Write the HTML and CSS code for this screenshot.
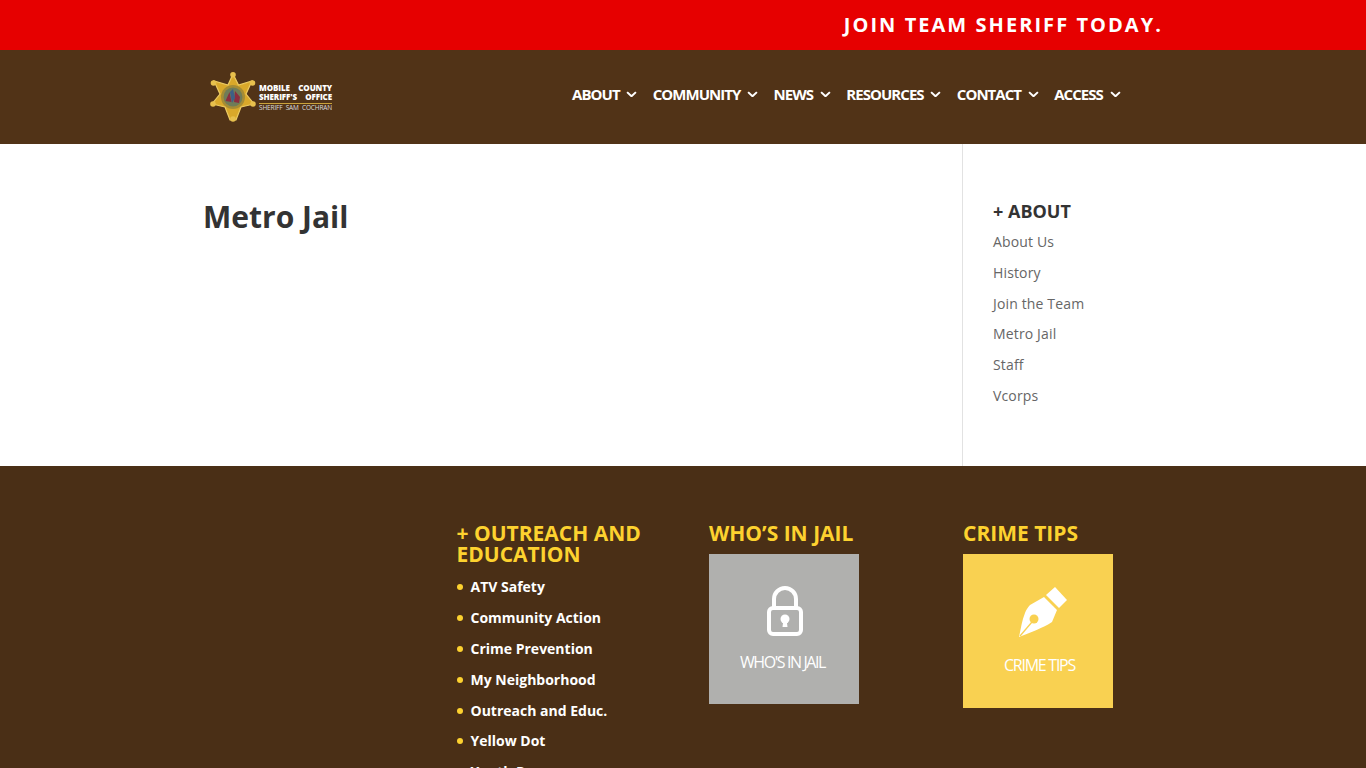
FILE: index.html
```html
<!DOCTYPE html>
<html lang="en">
<head>
<meta charset="utf-8">
<title>Metro Jail</title>
<link rel="stylesheet" href="styles.css">
</head>
<body>
<div class="topbar"><div class="wrap topbar-in"><span class="join">JOIN TEAM SHERIFF TODAY.</span></div></div>
<header class="header">
  <div class="wrap header-in">
    <a class="logo" href="#">
      <svg class="star" viewBox="0 1 46 50" width="46" height="50">
        <polygon points="23,3 28.500,14 42,10 36,23 44,33 31,36 26,49 20,49 15,36 2,33 10,23 4,10 18,14" fill="#d9a82a" stroke="#eccb63" stroke-width="1.200"/>
        <circle cx="23" cy="3.800" r="2.800" fill="#e7c04d"/><circle cx="42.500" cy="12" r="2.800" fill="#e7c04d"/><circle cx="43" cy="33" r="2.800" fill="#e7c04d"/><circle cx="23" cy="48" r="2.800" fill="#e7c04d"/><circle cx="3" cy="33" r="2.800" fill="#e7c04d"/><circle cx="3.500" cy="12" r="2.800" fill="#e7c04d"/>
        <circle cx="23" cy="26" r="12" fill="#a58c35"/>
        <circle cx="23" cy="26" r="9.500" fill="#6f7c58"/>
        <path d="M15.500 30l4-9 2 10zM24 31l1-11 5 6-1 6z" fill="#8b2e3f"/>
        <path d="M20 21l3-3 2 9-3 5z" fill="#3d5f86"/>
      </svg>
      <span class="logo-text">
        <span class="logo-line"><span>MOBILE</span><span>COUNTY</span></span>
        <span class="logo-line"><span>SHERIFF'S</span><span>OFFICE</span></span>
        <span class="logo-line logo-sub"><span>SHERIFF</span><span>SAM</span><span>COCHRAN</span></span>
      </span>
    </a>
    <nav class="nav">
      <a href="#">ABOUT<svg class="chev" viewBox="0 0 10 6"><path d="M1 1l4 3.800L9 1"/></svg></a>
      <a href="#">COMMUNITY<svg class="chev" viewBox="0 0 10 6"><path d="M1 1l4 3.800L9 1"/></svg></a>
      <a href="#">NEWS<svg class="chev" viewBox="0 0 10 6"><path d="M1 1l4 3.800L9 1"/></svg></a>
      <a href="#">RESOURCES<svg class="chev" viewBox="0 0 10 6"><path d="M1 1l4 3.800L9 1"/></svg></a>
      <a href="#">CONTACT<svg class="chev" viewBox="0 0 10 6"><path d="M1 1l4 3.800L9 1"/></svg></a>
      <a href="#">ACCESS<svg class="chev" viewBox="0 0 10 6"><path d="M1 1l4 3.800L9 1"/></svg></a>
    </nav>
  </div>
</header>
<main class="wrap main">
  <article class="content"><h1>Metro Jail</h1></article>
  <aside class="sidebar">
    <h4>+ ABOUT</h4>
    <ul>
      <li><a href="#">About Us</a></li>
      <li><a href="#">History</a></li>
      <li><a href="#">Join the Team</a></li>
      <li><a href="#">Metro Jail</a></li>
      <li><a href="#">Staff</a></li>
      <li><a href="#">Vcorps</a></li>
    </ul>
  </aside>
</main>
<footer class="footer">
  <div class="wrap footer-grid">
    <div></div>
    <div>
      <h4>+ OUTREACH AND EDUCATION</h4>
      <ul class="links">
        <li><a href="#">ATV Safety</a></li>
        <li><a href="#">Community Action</a></li>
        <li><a href="#">Crime Prevention</a></li>
        <li><a href="#">My Neighborhood</a></li>
        <li><a href="#">Outreach and Educ.</a></li>
        <li><a href="#">Yellow Dot</a></li>
        <li><a href="#">Youth Programs</a></li>
      </ul>
    </div>
    <div>
      <h4>WHO’S IN JAIL</h4>
      <a class="tile tile-grey" href="#">
        <svg class="lock" viewBox="0 0 36 50" width="36" height="50">
          <path d="M7 22V13a11 11 0 0 1 22 0v9" fill="none" stroke="#fff" stroke-width="4"/>
          <rect x="2" y="22" width="32" height="26" rx="4" fill="none" stroke="#fff" stroke-width="4"/>
          <circle cx="18" cy="33" r="4.500" fill="#fff"/>
          <path d="M16.400 34h3.200l.9 7h-5z" fill="#fff"/>
        </svg>
        <span class="tile-label">WHO'S IN JAIL</span>
      </a>
    </div>
    <div>
      <h4>CRIME TIPS</h4>
      <a class="tile tile-yellow" href="#">
        <svg class="pen" viewBox="0 0 48 50" width="48" height="50">
          <path d="M36 0L48 13 40 21 27 8z" fill="#fff"/>
          <path d="M25 10L38 23 33 35C24 41 12 45 0 50 2 41 3 33 6 26 7 23 9 20 11 18z" fill="#fff"/>
          <circle class="pen-cut" cx="15" cy="32" r="4.500"/>
          <path class="pen-slit" d="M1 49L13 35"/>
        </svg>
        <span class="tile-label">CRIME TIPS</span>
      </a>
    </div>
  </div>
</footer>
</body>
</html>
```
FILE: styles.css
```css
* { box-sizing: border-box; }
html, body { margin: 0; padding: 0; }
body { font-family: "Open Sans", "Liberation Sans", sans-serif; font-size: 14px; color: #666; background: #fff; height: 768px; overflow: hidden; }
a { text-decoration: none; color: inherit; }
ul { list-style: none; margin: 0; padding: 0; }
h1, h4 { margin: 0; }
.wrap { width: 958px; margin: 0 auto; }

.topbar { background: #e60000; height: 50px; }
.topbar-in { display: flex; justify-content: flex-end; align-items: center; height: 50px; padding-bottom: 2px; }
.join { color: #fff; font-size: 20px; font-weight: 700; letter-spacing: 2.050px; margin-right: -1px; }

.header { background: #513317; height: 94px; }
.header-in { display: flex; align-items: flex-start; height: 94px; }
.logo { display: flex; align-items: center; margin: 22px 0 0 6px; width: 122px; flex: none; }
.star { flex: none; display: block; }
.logo-text { display: block; margin: 2px 0 0 3px; width: 73px; color: #fff; }
.logo-line { display: flex; justify-content: space-between; font-size: 8px; line-height: 8.500px; font-weight: 800; letter-spacing: -0.1px; white-space: nowrap; }
.logo-sub { font-size: 6.500px; font-weight: 400; letter-spacing: -0.15px; border-top: 1px solid #c9a23a; margin-top: 1.500px; line-height: 8px; color: #ddd; }
.nav { display: flex; margin: 33px 0 0 240px; }
.nav a { display: flex; align-items: center; height: 21px; color: #fff; font-size: 15px; font-weight: 700; letter-spacing: -0.95px; margin-right: 15.300px; white-space: nowrap; }
.chev { width: 11px; height: 6.600px; margin-left: 6.800px; margin-top: 1px; fill: none; stroke: #fff; stroke-width: 1.800; }

.main { display: flex; height: 322px; }
.content { width: 759px; flex: none; padding-top: 54px; border-right: 1px solid #e2e2e2; }
.content h1 { font-size: 30px; line-height: 38px; font-weight: 700; color: #333; margin-left: -1px; }
.sidebar { padding: 57px 0 0 30px; flex: 1; }
.sidebar h4 { font-size: 18px; line-height: 21px; font-weight: 700; color: #333; margin-bottom: 10px; }
.sidebar li { font-size: 14px; line-height: 19px; margin-bottom: 11.800px; color: #666; letter-spacing: 0.15px; }

.footer { background: #4a2f16; height: 302px; }
.footer-grid { display: grid; grid-template-columns: 252.500px 252.500px 254px 199px; padding-top: 57px; }
.footer h4 { color: #fdd22f; font-size: 21px; line-height: 21px; font-weight: 700; margin-bottom: 10px; }
.links { margin-top: 12px; }
.links li { position: relative; padding-left: 14px; color: #fff; font-size: 14px; font-weight: 700; line-height: 19px; margin-bottom: 11.800px; top: 0.400px; }
.links li::before { content: ""; position: absolute; left: 0; top: 7px; width: 6px; height: 6px; border-radius: 50%; background: #fdd22f; }
.tile { display: flex; flex-direction: column; align-items: center; width: 150px; color: #fff; }
.tile-grey { background: #b0b0ae; height: 150px; padding-top: 32px; }
.tile-yellow { background: #f9d151; height: 154px; padding-top: 33px; }
.lock { display: block; margin-left: 1px; }
.pen { display: block; margin-left: 10px; }
.pen-cut { fill: #f9d151; }
.pen-slit { fill: none; stroke: #f9d151; stroke-width: 1.300; }
.tile-label { font-size: 16px; line-height: 20px; letter-spacing: -1.250px; white-space: nowrap; }
.tile-grey .tile-label { margin-top: 16px; margin-right: 3px; letter-spacing: -1.400px; }
.tile-yellow .tile-label { margin-top: 18px; margin-left: 3px; }
```
